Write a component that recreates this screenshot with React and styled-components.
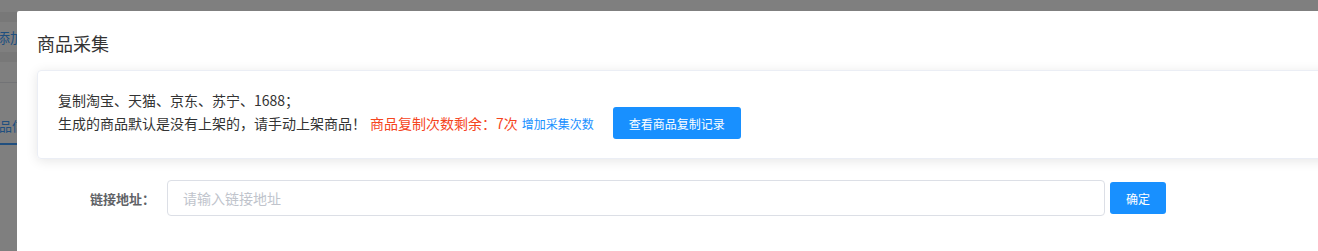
import React from "react";
import styled, { createGlobalStyle } from "styled-components";

const GlobalStyle = createGlobalStyle`
  html, body {
    margin: 0;
    padding: 0;
    width: 1318px;
    height: 251px;
    overflow: hidden;
    background: #ffffff;
    font-family: "Noto Sans CJK SC", "Noto Sans", "Liberation Sans", sans-serif;
  }
`;

const Screen = styled.div`
  position: relative;
  width: 1318px;
  height: 251px;
  overflow: hidden;
`;

/* page behind the dialog, only its left edge shows */
const BackPage = styled.div`
  display: flex;
  flex-direction: column;
  background: #ffffff;
  height: 100%;
`;

const Band = styled.div`
  height: ${(p) => p.h}px;
  background: ${(p) => (p.grey ? "#f0f0f0" : "#ffffff")};
`;

const AddRow = styled.div`
  height: 30px;
  display: flex;
  align-items: center;
  margin-left: -4px;
  font-size: 14px;
  color: #409eff;
  white-space: nowrap;
`;

const TabBar = styled.div`
  height: 62px;
  border-top: 1px solid #e4e7ed;
  display: flex;
  align-items: flex-end;
`;

const Tab = styled.div`
  margin-left: -14px;
  padding: 0 0 7px;
  width: 31px;
  line-height: 20px;
  font-size: 13px;
  color: #409eff;
  white-space: nowrap;
  border-bottom: 2px solid #409eff;
`;

const Overlay = styled.div`
  position: absolute;
  inset: 0;
  background: rgba(0, 0, 0, 0.5);
`;

const Dialog = styled.div`
  position: absolute;
  left: 17px;
  top: 11px;
  width: 1360px;
  height: 300px;
  background: #ffffff;
  border-radius: 2px;
  padding: 0 20px;
  box-sizing: border-box;
`;

const Title = styled.div`
  padding-top: 20px;
  font-size: 18px;
  line-height: 24px;
  color: #333333;
`;

const NoticeCard = styled.div`
  margin-top: 15px;
  border: 1px solid #ebeef5;
  border-radius: 4px;
  box-shadow: 0 2px 12px 0 rgba(0, 0, 0, 0.1);
  padding: 19px 20px 22px;
  font-size: 14px;
  color: #333333;
`;

const Line = styled.div`
  line-height: 20px;
`;

const ActionLine = styled.div`
  height: 26px;
  display: flex;
  align-items: center;
  white-space: nowrap;
`;

const Remain = styled.span`
  color: #f5451e;
  margin-left: 4px;
`;

const AddLink = styled.span`
  color: #1890ff;
  font-size: 12px;
  margin-left: 4px;
  cursor: pointer;
`;

const PrimaryButton = styled.button`
  height: 32px;
  flex: none;
  margin-left: ${(p) => p.gap || 0}px;
  padding: 0 16px;
  background: #1890ff;
  border: none;
  border-radius: 3px;
  color: #ffffff;
  font-family: inherit;
  font-size: 12px;
  cursor: pointer;
`;

const FormRow = styled.div`
  margin-top: 21px;
  display: flex;
  align-items: center;
`;

const Label = styled.label`
  width: 130px;
  box-sizing: border-box;
  padding-right: 12px;
  text-align: right;
  font-size: 13px;
  font-weight: 700;
  color: #606266;
`;

const Input = styled.input`
  width: 938px;
  height: 36px;
  box-sizing: border-box;
  border: 1px solid #dcdfe6;
  border-radius: 4px;
  padding: 0 15px;
  font-family: inherit;
  font-size: 14px;
  color: #606266;
  outline: none;

  &::placeholder {
    color: #c0c4cc;
  }
`;

export default function App() {
  return (
    <Screen>
      <GlobalStyle />
      <BackPage>
        <Band h={12} />
        <Band h={10} grey />
        <AddRow>添加商品</AddRow>
        <Band h={10} grey />
        <Band h={20} />
        <TabBar>
          <Tab>商品信息</Tab>
        </TabBar>
      </BackPage>
      <Overlay />
      <Dialog>
        <Title>商品采集</Title>
        <NoticeCard>
          <Line>复制淘宝、天猫、京东、苏宁、1688；</Line>
          <ActionLine>
            生成的商品默认是没有上架的，请手动上架商品！
            <Remain>商品复制次数剩余：7次</Remain>
            <AddLink>增加采集次数</AddLink>
            <PrimaryButton gap={19}>查看商品复制记录</PrimaryButton>
          </ActionLine>
        </NoticeCard>
        <FormRow>
          <Label>链接地址：</Label>
          <Input placeholder="请输入链接地址" />
          <PrimaryButton gap={5}>确定</PrimaryButton>
        </FormRow>
      </Dialog>
    </Screen>
  );
}
